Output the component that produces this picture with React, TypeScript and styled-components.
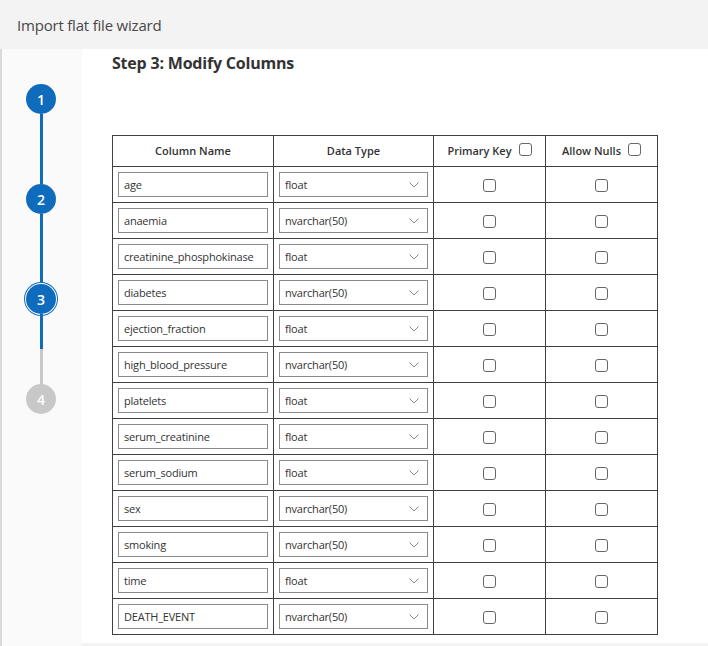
import React from "react";
import styled, { createGlobalStyle } from "styled-components";

const Global = createGlobalStyle`
  html, body { margin: 0; padding: 0; background: #ffffff; }
  body { font-family: "Open Sans", "Noto Sans", sans-serif; color: #333; }
  * { box-sizing: border-box; }
`;

const Page = styled.div`
  width: 708px;
  height: 646px;
  display: flex;
  flex-direction: column;
  overflow: hidden;
`;

const TitleBar = styled.div`
  height: 49px;
  flex: none;
  background: #f3f3f3;
  display: flex;
  align-items: center;
  padding-left: 17px;
  font-size: 15px;
  color: #484848;
  letter-spacing: -0.2px;
`;

const Body = styled.div`
  flex: 1;
  display: flex;
  min-height: 0;
`;

const Sidebar = styled.div`
  width: 82px;
  flex: none;
  background: #fafafa;
  border-left: 2px solid #dadada;
  display: flex;
  flex-direction: column;
  align-items: center;
  padding-top: 35px;
  padding-right: 2px;
`;

type StepState = "done" | "current" | "todo";

const Circle = styled.div<{ $state: StepState }>`
  width: 30px;
  height: 30px;
  border-radius: 50%;
  flex: none;
  display: flex;
  align-items: center;
  justify-content: center;
  color: #fff;
  font-size: 14px;
  font-weight: 600;
  background: ${(p) => (p.$state === "todo" ? "#c8c8c8" : "#0f6cbd")};
  box-shadow: ${(p) =>
    p.$state === "current"
      ? "0 0 0 1px #ffffff, 0 0 0 2px #0f6cbd"
      : "none"};
`;

const Connector = styled.div<{ $split?: boolean; $todo?: boolean }>`
  width: 3px;
  height: 70px;
  flex: none;
  background: ${(p) =>
    p.$split
      ? "linear-gradient(#0f6cbd 0 50%, #c8c8c8 50% 100%)"
      : p.$todo
      ? "#c8c8c8"
      : "#0f6cbd"};
`;

const Main = styled.div`
  flex: 1;
  background: #fff;
  padding: 4px 0 0 30px;
  border-bottom: 3px solid #f3f3f3;
`;

const Heading = styled.h2`
  margin: 0;
  font-size: 16px;
  font-weight: 700;
  color: #333;
  line-height: 21px;
  letter-spacing: -0.2px;
`;

const Table = styled.table`
  margin-top: 61px;
  border-collapse: collapse;
  border: 1px solid #404040;
  width: 546px;
  table-layout: fixed;
`;

const Th = styled.th<{ $w: number }>`
  width: ${(p) => p.$w}px;
  height: 31px;
  border: 1px solid #404040;
  font-size: 11px;
  font-weight: 600;
  color: #333;
  text-align: center;
  vertical-align: middle;
  padding: 0 0 2px 0;
`;

const HeadInner = styled.span`
  display: inline-flex;
  align-items: center;
  gap: 7px;
`;

const Td = styled.td`
  height: 36px;
  border: 1px solid #404040;
  padding: 0 5px;
  vertical-align: middle;
  text-align: center;
`;

const TextBox = styled.div`
  height: 25px;
  border: 1px solid #8a8a8a;
  display: flex;
  align-items: center;
  padding-left: 5px;
  font-size: 11px;
  color: #333;
  text-align: left;
  white-space: nowrap;
  overflow: hidden;
  letter-spacing: -0.2px;
`;

const SelectBox = styled(TextBox)`
  justify-content: space-between;
  padding-right: 8px;
`;

const Box = styled.span`
  display: inline-block;
  width: 13px;
  height: 13px;
  border: 1px solid #666;
  border-radius: 3px;
  background: #fff;
  vertical-align: middle;
  margin-top: -2px;
`;

const Chevron = () => (
  <svg width="10" height="6" viewBox="0 0 10 6">
    <path d="M0.5 0.5 L5 5 L9.5 0.5" fill="none" stroke="#888" strokeWidth="1" />
  </svg>
);

const rows: [string, string][] = [
  ["age", "float"],
  ["anaemia", "nvarchar(50)"],
  ["creatinine_phosphokinase", "float"],
  ["diabetes", "nvarchar(50)"],
  ["ejection_fraction", "float"],
  ["high_blood_pressure", "nvarchar(50)"],
  ["platelets", "float"],
  ["serum_creatinine", "float"],
  ["serum_sodium", "float"],
  ["sex", "nvarchar(50)"],
  ["smoking", "nvarchar(50)"],
  ["time", "float"],
  ["DEATH_EVENT", "nvarchar(50)"],
];

export default function App() {
  return (
    <Page>
      <Global />
      <TitleBar>Import flat file wizard</TitleBar>
      <Body>
        <Sidebar>
          <Circle $state="done">1</Circle>
          <Connector />
          <Circle $state="done">2</Circle>
          <Connector />
          <Circle $state="current">3</Circle>
          <Connector $split />
          <Circle $state="todo">4</Circle>
        </Sidebar>
        <Main>
          <Heading>Step 3: Modify Columns</Heading>
          <Table>
            <thead>
              <tr>
                <Th $w={161}>Column Name</Th>
                <Th $w={160}>Data Type</Th>
                <Th $w={112}>
                  <HeadInner>
                    Primary Key <Box />
                  </HeadInner>
                </Th>
                <Th $w={112}>
                  <HeadInner>
                    Allow Nulls <Box />
                  </HeadInner>
                </Th>
              </tr>
            </thead>
            <tbody>
              {rows.map(([name, type]) => (
                <tr key={name}>
                  <Td>
                    <TextBox>{name}</TextBox>
                  </Td>
                  <Td>
                    <SelectBox>
                      <span>{type}</span>
                      <Chevron />
                    </SelectBox>
                  </Td>
                  <Td>
                    <Box />
                  </Td>
                  <Td>
                    <Box />
                  </Td>
                </tr>
              ))}
            </tbody>
          </Table>
        </Main>
      </Body>
    </Page>
  );
}
